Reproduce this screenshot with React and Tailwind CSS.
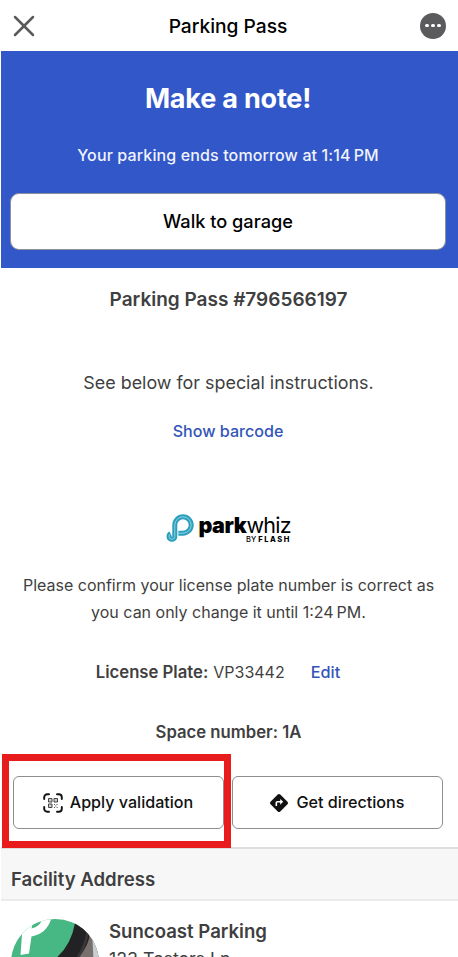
import { X } from "lucide-react";

function ParkwhizLogo() {
  return (
    <div className="flex h-[31px] w-[125px]">
      <svg width="28" height="29" viewBox="0 0 28 29" fill="none">
        <path
          d="M12.4 19.2 H17 A8.2 8.2 0 1 0 8.8 11 V22.4 A2.9 2.9 0 0 1 3 22.4 Q3 20.6 4.6 19.8"
          stroke="#2b9fbb"
          strokeWidth="5"
        />
        <path
          d="M12.4 19.2 H17 A8.2 8.2 0 1 0 8.8 11 V22.4 A2.9 2.9 0 0 1 3 22.4 Q3 20.6 4.6 19.8"
          stroke="#8fd3e2"
          strokeWidth="1"
        />
      </svg>
      <div className="ml-[5px] flex w-[92px] flex-col items-end text-black">
        <div className="h-[22px] text-[21.5px] leading-[22px] font-normal whitespace-nowrap">
          <span className="font-black tracking-[-0.4px]">park</span>
          <span className="tracking-[-0.7px]">whiz</span>
        </div>
        <div className="flex h-[8px] items-center gap-[2px] text-[7.5px] leading-[8px] whitespace-nowrap">
          <span className="font-medium">BY</span>
          <span className="font-extrabold tracking-[1.6px]">FLASH</span>
        </div>
      </div>
    </div>
  );
}

function QrScanIcon() {
  return (
    <svg width="20" height="20" viewBox="0 0 20 20" fill="none" stroke="#111">
      <path
        d="M1.2 6V4.2a3 3 0 0 1 3-3H6M14 1.2h1.8a3 3 0 0 1 3 3V6M18.8 14v1.8a3 3 0 0 1-3 3H14M6 18.8H4.2a3 3 0 0 1-3-3V14"
        strokeWidth="1.9"
        strokeLinecap="round"
      />
      <path
        d="M5.5 5.5h3.5v3.5H5.5zM11 5.5h3.5v3.5h-3.5zM5.5 11h3.5v3.5H5.5z"
        stroke="#444"
        strokeWidth="1"
        fill="#ccc"
      />
      <path
        d="M11 11.5h1M13.5 11.5h1M12.2 13h1.2M11 14.5h1M13.7 14.5h1"
        stroke="#555"
        strokeWidth="1.1"
      />
    </svg>
  );
}

function DirectionsIcon() {
  return (
    <svg width="20" height="20" viewBox="0 0 20 20" fill="none">
      <rect
        x="3.1"
        y="3.1"
        width="13.8"
        height="13.8"
        rx="1.8"
        fill="#111"
        transform="rotate(45 10 10)"
      />
      <path d="M7.3 13V9.8q0-1 1-1h3.7" stroke="#fff" strokeWidth="1.6" />
      <path d="M11.2 5.9l3 2.9-3 2.9z" fill="#fff" />
    </svg>
  );
}

function FacilityPhoto() {
  return (
    <svg width="88" height="88" viewBox="0 0 88 88">
      <defs>
        <clipPath id="photo">
          <circle cx="44" cy="44" r="44" />
        </clipPath>
      </defs>
      <g clipPath="url(#photo)">
        <rect width="88" height="88" fill="#47b783" />
        <path d="M72 0H88V88H44L66 30z" fill="#77706c" />
        <path d="M81 12L88 20V50H83z" fill="#c8cfd0" />
        <path
          d="M64 4Q60 27 44 40V60H68V38Q78 26 79 14Q72 6 64 4z"
          fill="#222224"
        />
        <path
          d="M76.5 14Q74 28 66 40"
          stroke="#3b3739"
          strokeWidth="2.5"
          fill="none"
        />
        <path
          d="M9.5 36L11.5 8L22 -4H41Q38 14 20.5 17.5L18 34.5zM20.5 9.5Q29 8 31 0L22 2.5z"
          fill="#fff"
          fillRule="evenodd"
        />
      </g>
    </svg>
  );
}

export default function App() {
  return (
    <div className="h-[957px] w-[458px] overflow-hidden bg-white pl-px font-['Inter',sans-serif] text-[#3f3f41]">
      {/* top bar */}
      <header className="flex h-[51px] items-center justify-between pr-[12px] pl-[5px] text-black">
        <X size={36} strokeWidth={1.7} color="#5b5b5d" />
        <h1 className="mr-[6px] pt-px text-[19.2px] font-medium">
          Parking Pass
        </h1>
        <div className="flex size-[26px] items-center justify-center gap-[2.2px] rounded-full bg-[#5b5b5e]">
          <span className="size-[3.7px] rounded-full bg-white"></span>
          <span className="size-[3.7px] rounded-full bg-white"></span>
          <span className="size-[3.7px] rounded-full bg-white"></span>
        </div>
      </header>

      {/* banner */}
      <section className="flex h-[217px] flex-col items-center bg-[#3257c9] pr-[12px] pl-[9px] text-white">
        <h2 className="mt-[31px] text-[27px] leading-[34px] font-bold tracking-[-0.2px]">
          Make a note!
        </h2>
        <p className="mt-[29px] text-[16px] leading-[20px] font-medium tracking-[0.13px] text-[#f0f3fc]">
          Your parking ends tomorrow at 1:14{"\u2009"}PM
        </p>
        <button className="mt-[28px] h-[57px] w-full rounded-[9px] border border-[#8f9199] bg-white text-[18.2px] font-medium text-black">
          Walk to garage
        </button>
      </section>

      {/* pass details */}
      <section className="flex h-[486px] flex-col items-center pr-[2px]">
        <h3 className="mt-[20px] text-[19px] leading-[24px] font-semibold">
          Parking Pass #796566197
        </h3>
        <p className="mt-[59px] text-[17.9px] leading-[24px]">
          See below for special instructions.
        </p>
        <a className="mt-[26px] mr-px text-[16.1px] leading-[20px] font-medium text-[#3355b8]">
          Show barcode
        </a>
        <div className="mt-[73px]">
          <ParkwhizLogo />
        </div>
        <p className="mt-[27px] text-center text-[16px] leading-[27px] whitespace-nowrap">
          Please confirm your license plate number is correct as
          <br />
          you can only change it until 1:24{"\u2009"}PM.
        </p>
        <div className="mt-[36px] mr-[21px] flex text-[16px] leading-[20px] whitespace-nowrap">
          <strong className="text-[16.7px] font-semibold">License Plate:</strong>
          <span className="ml-[5px]">VP33442</span>
          <a className="ml-[26px] text-[16.3px] font-medium text-[#3355b8]">
            Edit
          </a>
        </div>
        <p className="mt-[40px] text-[16.7px] leading-[20px] font-semibold">
          Space number: 1A
        </p>
      </section>

      {/* actions, the highlighted frame runs over the divider below */}
      <section className="flex h-[94px] items-start pl-px">
        <div className="relative z-10 h-[94px] w-[229px] border-[7px] border-[#e81c1c] pt-[15px] pl-[4px]">
          <button className="flex h-[53px] w-[211px] items-center justify-center gap-[7px] rounded-[6px] border border-[#8e8e90] bg-white pr-px text-[16.1px] font-medium whitespace-nowrap text-[#111]">
            <QrScanIcon />
            Apply validation
          </button>
        </div>
        <button className="mt-[22px] ml-px flex h-[53px] w-[211px] items-center justify-center gap-[7px] rounded-[6px] border border-[#8e8e90] bg-white pr-px text-[16.2px] font-medium whitespace-nowrap text-[#111]">
          <DirectionsIcon />
          Get directions
        </button>
      </section>

      {/* facility */}
      <section>
        <h3 className="-mt-px flex h-[54px] items-center border-t-2 border-b-2 border-t-[#dedede] border-b-[#ebebeb] bg-[#f7f7f7] pt-[11px] pl-[10px] text-[18.6px] font-semibold">
          Facility Address
        </h3>
        <div className="flex pt-[18px] pl-[10px]">
          <FacilityPhoto />
          <div className="-mt-px ml-[10px] leading-[26px]">
            <h4 className="text-[18.6px] font-semibold">Suncoast Parking</h4>
            <p className="mt-[2px] text-[17.8px]">123 Testers Ln.</p>
          </div>
        </div>
      </section>
    </div>
  );
}
